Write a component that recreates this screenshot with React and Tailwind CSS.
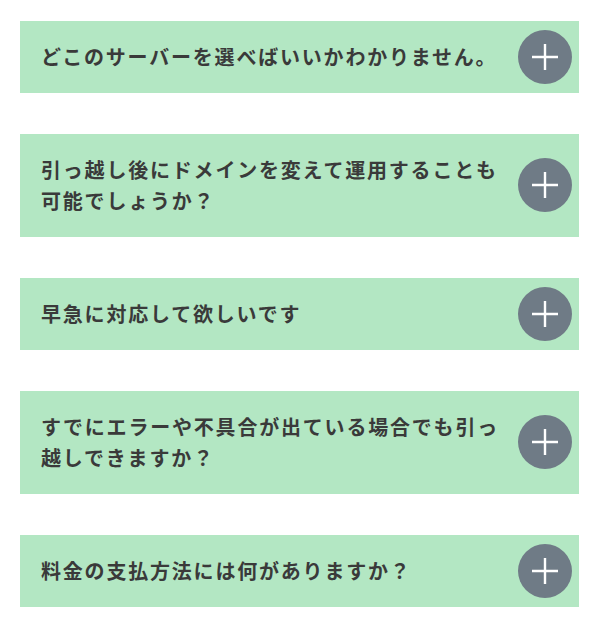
const faqs = [
  'どこのサーバーを選べばいいかわかりません。',
  '引っ越し後にドメインを変えて運用することも可能でしょうか？',
  '早急に対応して欲しいです',
  'すでにエラーや不具合が出ている場合でも引っ越しできますか？',
  '料金の支払方法には何がありますか？',
];

const PlusCircle = () => (
  <span className="-my-[12px] flex h-[54px] w-[54px] shrink-0 items-center justify-center rounded-full bg-[#6f7b86]">
    <svg width="26" height="26" viewBox="0 0 26 26">
      <path d="M13 0v26M0 13h26" stroke="#fff" strokeWidth="2.4" />
    </svg>
  </span>
);

export default function App() {
  return (
    <div
      className="flex flex-col gap-[41px] bg-white px-5 pt-[21px] pb-5"
      style={{ fontFamily: '"Noto Sans CJK JP", "Noto Sans", sans-serif' }}
    >
      {faqs.map((q) => (
        <div
          key={q}
          className="flex w-[559px] items-center gap-[15px] bg-[#b3e7c3] pt-[20px] pb-[21px] pl-[21px] pr-[7px]"
        >
          <p className="flex-1 text-[20px] font-bold leading-[31px] tracking-[1.8px] text-[#3a3a3a]">
            {q}
          </p>
          <PlusCircle />
        </div>
      ))}
    </div>
  );
}
